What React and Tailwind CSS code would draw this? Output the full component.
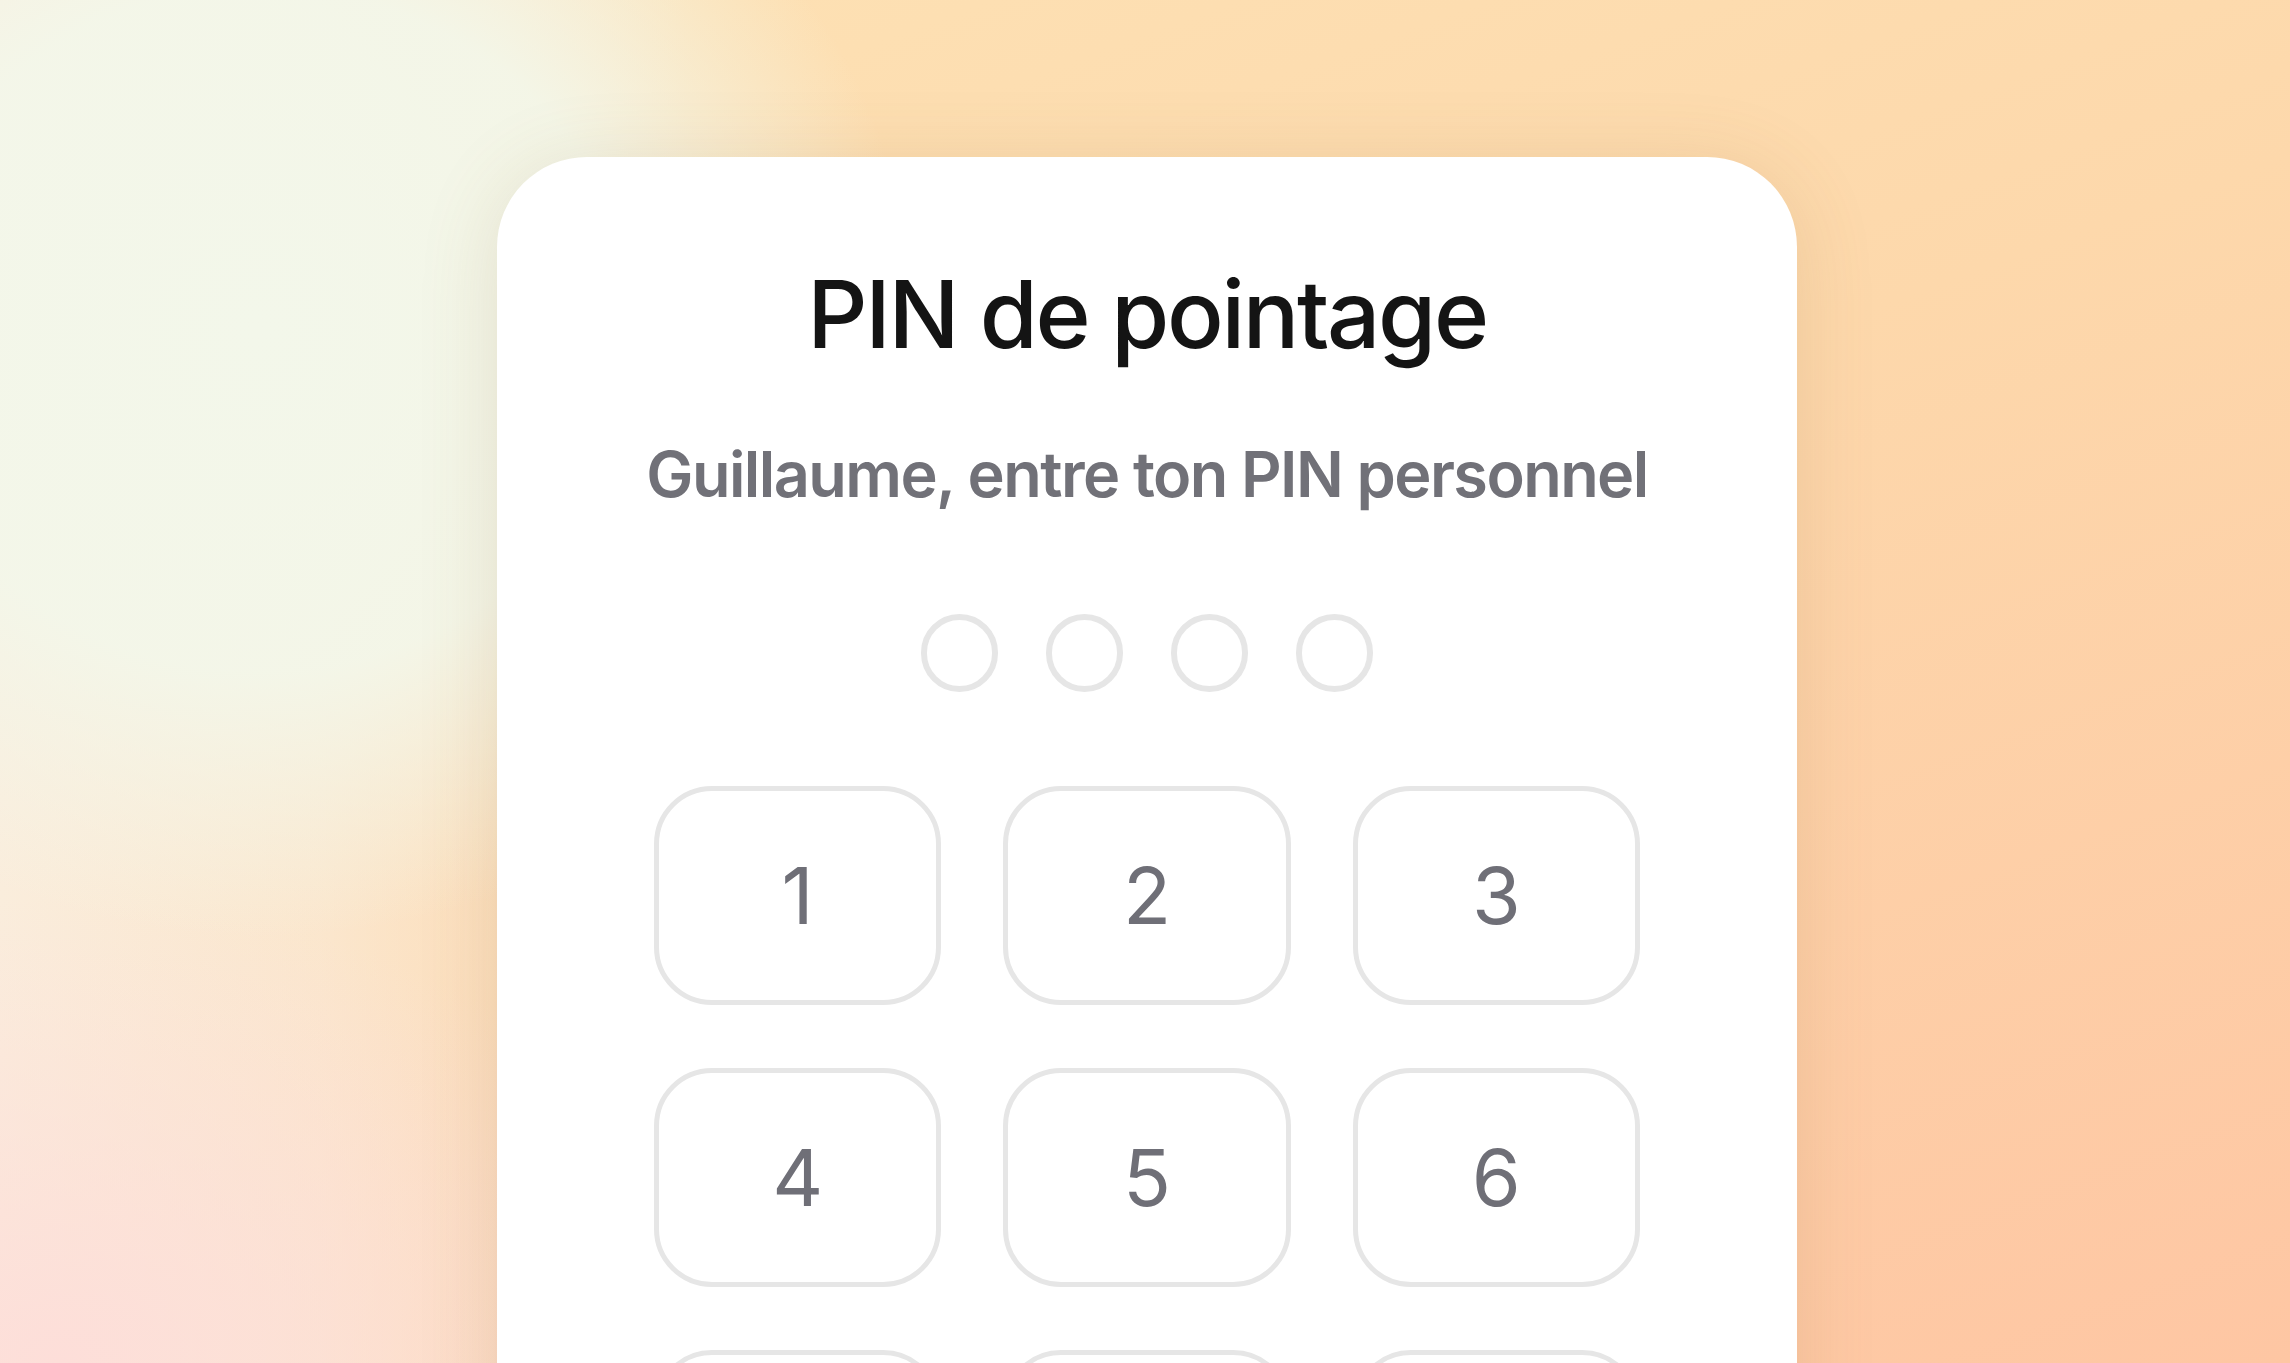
import React, { useState } from 'react';

const KEYS = ['1', '2', '3', '4', '5', '6', '7', '8', '9', '', '0', '⌫'];

const App = () => {
  const [pin, setPin] = useState('');

  const handleKey = (k) => {
    if (k === '⌫') {
      setPin(pin.slice(0, -1));
    } else if (k && pin.length < 4) {
      setPin(pin + k);
    }
  };

  return (
    <div className="h-[1363px] w-full overflow-hidden font-['Inter',sans-serif] bg-[radial-gradient(ellipse_820px_760px_at_260px_330px,rgba(243,247,234,1)_0%,rgba(243,247,234,0.92)_45%,rgba(243,247,234,0)_80%),radial-gradient(ellipse_900px_620px_at_60px_1363px,rgba(253,222,217,1)_0%,rgba(253,224,217,0)_75%),linear-gradient(to_right,rgba(250,237,220,1)_0%,rgba(250,237,220,0.7)_14%,rgba(250,237,220,0)_30%),linear-gradient(160deg,#fde3b6_0%,#fdd8ab_45%,#fec6a3_100%)]">
      <div className="flex justify-center pt-[157px] pl-[4px]">
        {/* Carte PIN */}
        <div className="w-[1300px] shrink-0 rounded-[90px] bg-white pt-[110px] pb-[120px] shadow-[0_10px_80px_rgba(150,110,60,0.16)] flex flex-col items-center">
          <h1 className="text-[94px] leading-none font-medium tracking-tight text-[#141414]">
            PIN de pointage
          </h1>
          <p className="mt-[82px] text-[63px] leading-none font-semibold tracking-tight text-[#717178]">
            Guillaume, entre ton PIN personnel
          </p>

          {/* Points */}
          <div className="mt-[108px] flex gap-[48px]">
            {[0, 1, 2, 3].map((i) => (
              <div
                key={i}
                className={`h-[78px] w-[77px] rounded-full border-[6px] ${
                  i < pin.length ? 'border-[#717178] bg-[#717178]' : 'border-[#e6e6e6]'
                }`}
              />
            ))}
          </div>

          {/* Clavier */}
          <div className="mt-[94px] grid w-[986px] grid-cols-3 gap-x-[62px] gap-y-[63px]">
            {KEYS.map((k, i) => (
              <button
                key={i}
                type="button"
                onClick={() => handleKey(k)}
                className={`flex h-[219px] items-center justify-center rounded-[58px] text-[79px] leading-none font-normal text-[#6f6f77] ${
                  k === '' ? 'border-0' : 'border-[5px] border-[#e6e6e6] bg-white'
                }`}
              >
                {k}
              </button>
            ))}
          </div>
        </div>
      </div>
    </div>
  );
};

export default App;
